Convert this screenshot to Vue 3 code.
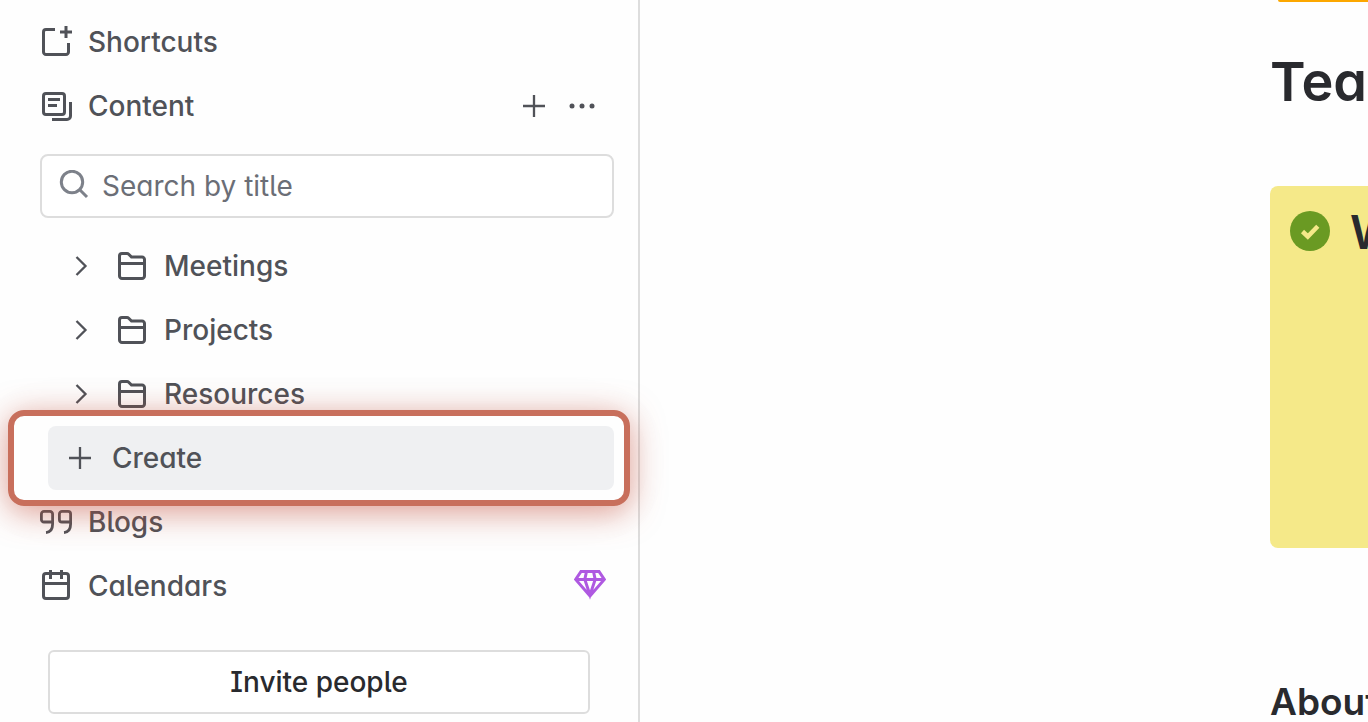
<script setup>
import { ref } from 'vue'

const query = ref('')
const folders = ['Meetings', 'Projects', 'Resources']
</script>

<template>
  <div class="app">
    <aside class="sidebar">
      <nav class="nav" aria-label="Space">
        <a href="#" class="row">
          <svg class="icon" viewBox="0 0 32 32" aria-hidden="true">
            <path d="M15 3.500H6A2.500 2.500 0 0 0 3.500 6V26A2.500 2.500 0 0 0 6 28.500H26A2.500 2.500 0 0 0 28.500 26V17" />
            <path d="M26 0V12M20 6H32" />
          </svg>
          <span>Shortcuts</span>
        </a>
        <div class="row">
          <a href="#" class="row-link">
            <svg class="icon" viewBox="0 0 32 32" aria-hidden="true">
              <rect x="3.500" y="3.500" width="21" height="21" rx="2.500" />
              <path d="M8 9.500H20M8 15.500H17M30.500 12V26A3.500 3.500 0 0 1 27 29.500H12" />
            </svg>
            <span>Content</span>
          </a>
          <button type="button" class="action" aria-label="Create content">
            <svg class="icon thin" viewBox="0 0 32 32" aria-hidden="true"><path d="M16 5V27M5 16H27" /></svg>
          </button>
          <button type="button" class="action" aria-label="More actions">
            <svg class="icon dots" viewBox="0 0 32 32" aria-hidden="true">
              <circle cx="6" cy="16" r="2.500" /><circle cx="16" cy="16" r="2.500" /><circle cx="26" cy="16" r="2.500" />
            </svg>
          </button>
        </div>

        <label class="search">
          <svg class="icon" viewBox="0 0 32 32" aria-hidden="true">
            <circle cx="14" cy="12" r="10.700" /><path d="M21.500 19.500L29 27" />
          </svg>
          <input v-model="query" type="text" placeholder="Search by title" aria-label="Search by title" />
        </label>

        <a v-for="name in folders" :key="name" href="#" class="row folder">
          <svg class="chevron" viewBox="0 0 16 24" aria-hidden="true"><path d="M4.500 3L13.500 12L4.500 21" /></svg>
          <svg class="icon" viewBox="0 0 32 32" aria-hidden="true">
            <path d="M3.500 26V6A2.500 2.500 0 0 1 6 3.500H11Q12 3.500 12.700 4.200L15.500 7H26A2.500 2.500 0 0 1 28.500 9.500V26A2.500 2.500 0 0 1 26 28.500H6A2.500 2.500 0 0 1 3.500 26ZM3.500 13.500H28.500" />
          </svg>
          <span>{{ name }}</span>
        </a>

        <div class="create-wrap">
          <button type="button" class="create">
            <svg class="icon thin" viewBox="0 0 32 32" aria-hidden="true"><path d="M16 5V27M5 16H27" /></svg>
            <span>Create</span>
          </button>
        </div>

        <a href="#" class="row">
          <svg class="icon quote" viewBox="0 0 32 32" aria-hidden="true">
            <path d="M12.600 16H4A2.600 2.600 0 0 1 1.400 13.400V8A2.600 2.600 0 0 1 4 5.400H10A2.600 2.600 0 0 1 12.600 8V18C12.600 23 10.500 26.200 6 26.600" />
            <path d="M30.600 16H22A2.600 2.600 0 0 1 19.400 13.400V8A2.600 2.600 0 0 1 22 5.400H28A2.600 2.600 0 0 1 30.600 8V18C30.600 23 28.500 26.200 24 26.600" />
          </svg>
          <span>Blogs</span>
        </a>
        <a href="#" class="row">
          <svg class="icon" viewBox="0 0 32 32" aria-hidden="true">
            <rect x="3.500" y="3.500" width="25" height="25" rx="2.500" />
            <path d="M3.500 13.500H28.500M10.500 0V9M21.500 0V9" />
          </svg>
          <span class="grow">Calendars</span>
          <svg class="gem" viewBox="0 0 32 32" aria-hidden="true">
            <path d="M7 1.500H25L30.300 9.500L16 26L1.700 9.500ZM2 9.500H30M12.500 1.500L10.800 9.500L16 25L21.200 9.500L19.500 1.500" />
          </svg>
        </a>
      </nav>
      <button type="button" class="invite">Invite people</button>
    </aside>

    <main class="page">
      <div class="banner"></div>
      <h1>Team</h1>
      <section class="panel">
        <svg class="check" viewBox="0 0 40 40" aria-hidden="true">
          <circle cx="20" cy="20" r="20" /><path d="M12.500 20.500L17.800 25.500L27.800 15.200" />
        </svg>
        <h2>W</h2>
      </section>
      <h3>About</h3>
    </main>
  </div>
</template>

<style>
body {
  margin: 0;
  background: #fefefe;
}
</style>

<style scoped>
.app {
  display: flex;
  height: 100vh;
  overflow: hidden;
  color: #505258;
  font-family: Inter, "Liberation Sans", sans-serif;
  font-feature-settings: "cv05", "cv08", "cv11";
  font-size: 28px;
  font-weight: 500;
  line-height: 32px;
}
.app *,
.app *::after {
  box-sizing: border-box;
}
button,
input {
  font: inherit;
  font-feature-settings: inherit;
  color: inherit;
}
button {
  cursor: pointer;
}
.sidebar {
  flex: none;
  width: 640px;
  padding: 10px 24px 8px 40px;
  border-right: 2px solid #dddddd;
}
.nav {
  display: flex;
  flex-direction: column;
}
.row,
.row-link {
  display: flex;
  align-items: center;
  gap: 16px;
  color: inherit;
  text-decoration: none;
}
.row {
  height: 64px;
}
.row-link,
.grow {
  flex: 1;
}
.icon {
  flex: none;
  width: 32px;
  height: 32px;
  fill: none;
  stroke: currentColor;
  stroke-width: 3;
}
.thin {
  stroke-width: 2.3;
}
.quote {
  overflow: visible;
  stroke-width: 2.8;
}
.dots {
  fill: currentColor;
  stroke: none;
}
.action {
  display: flex;
  padding: 0;
  border: 0;
  background: none;
}
.action:last-child {
  margin-right: 16px;
}
.search {
  display: flex;
  align-items: center;
  gap: 12px;
  height: 64px;
  margin: 16px 0;
  padding: 0 16px;
  border: 2px solid #dddddd;
  border-radius: 8px;
  background: #fff;
  color: #7d818a;
}
.search input {
  flex: 1;
  min-width: 0;
  padding: 0;
  border: 0;
  outline: 0;
  background: none;
  color: #505258;
  font-weight: 400;
}
.search input::placeholder {
  color: #6b6e76;
  opacity: 1;
}
.folder {
  padding-left: 32px;
}
.chevron {
  width: 16px;
  height: 24px;
  margin-right: 12px;
  fill: none;
  stroke: currentColor;
  stroke-width: 2.3;
}
.create-wrap {
  position: relative;
  padding-left: 8px;
}
.create-wrap::after {
  content: "";
  position: absolute;
  inset: -16px -16px -16px -32px;
  border: 6px solid #c86f5c;
  border-radius: 16px;
  box-shadow: 0 6px 32px rgba(200, 80, 60, 0.55), 0 4px 64px rgba(0, 0, 0, 0.03);
  pointer-events: none;
}
.create {
  display: flex;
  align-items: center;
  gap: 16px;
  width: 100%;
  height: 64px;
  padding: 0 16px;
  border: 0;
  border-radius: 8px;
  background: #eff0f2;
}
.gem {
  width: 32px;
  height: 32px;
  margin-right: 8px;
  fill: none;
  stroke: #af59e1;
  stroke-width: 3;
}
.invite {
  display: block;
  width: calc(100% - 32px);
  height: 64px;
  margin: 32px 0 0 8px;
  border: 2px solid #dddddd;
  border-radius: 6px;
  background: #fff;
  color: #292a2e;
}
.page {
  flex: 1;
  min-width: 0;
  padding-left: 630px;
  overflow: hidden;
  color: #292a2e;
  white-space: nowrap;
}
.banner {
  height: 2px;
  margin-left: 8px;
  border-radius: 0 0 0 8px;
  background: #fca700;
}
h1,
h2,
h3 {
  margin: 0;
  font-weight: 600;
}
h1 {
  margin: 48px 0 72px;
  font-size: 54px;
  line-height: 64px;
}
.panel {
  display: flex;
  gap: 20px;
  height: 362px;
  padding: 16px 20px;
  border-radius: 8px 0 0 8px;
  background: #f5e989;
}
.check {
  flex: none;
  width: 40px;
  height: 40px;
  margin-top: 9px;
  fill: #6a9a23;
}
.check path {
  fill: none;
  stroke: #f5e989;
  stroke-width: 4.5;
}
h2 {
  font-size: 46px;
  line-height: 60px;
}
h3 {
  margin-top: 130px;
  font-size: 37px;
  line-height: 48px;
}
</style>
